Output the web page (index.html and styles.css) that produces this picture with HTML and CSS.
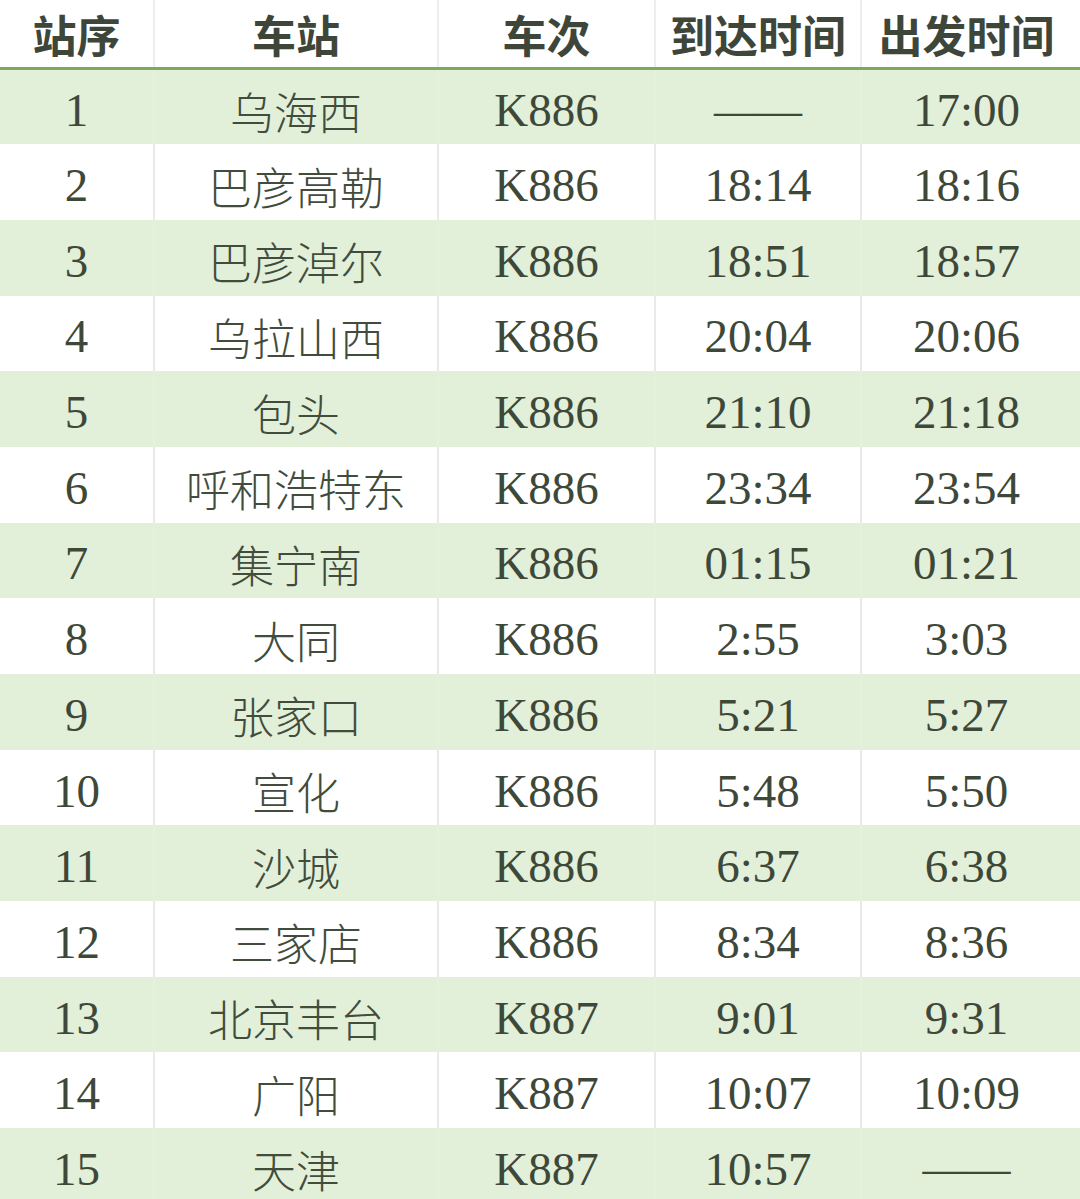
FILE: index.html
```html
<!DOCTYPE html>
<html lang="zh-CN">
<head>
<meta charset="utf-8">
<title>K886/K887 时刻表</title>
<link rel="stylesheet" href="styles.css">
</head>
<body>
<table class="timetable">
  <colgroup>
    <col class="c-no"><col class="c-station"><col class="c-train"><col class="c-arr"><col class="c-dep">
  </colgroup>
  <thead>
    <tr><th>站序</th><th>车站</th><th>车次</th><th>到达时间</th><th class="last">出发时间</th></tr>
  </thead>
  <tbody>
    <tr class="alt"><td>1</td><td class="cn">乌海西</td><td>K886</td><td class="dash">——</td><td class="last">17:00</td></tr>
    <tr><td>2</td><td class="cn">巴彦高勒</td><td>K886</td><td>18:14</td><td class="last">18:16</td></tr>
    <tr class="alt"><td>3</td><td class="cn">巴彦淖尔</td><td>K886</td><td>18:51</td><td class="last">18:57</td></tr>
    <tr><td>4</td><td class="cn">乌拉山西</td><td>K886</td><td>20:04</td><td class="last">20:06</td></tr>
    <tr class="alt"><td>5</td><td class="cn">包头</td><td>K886</td><td>21:10</td><td class="last">21:18</td></tr>
    <tr><td>6</td><td class="cn">呼和浩特东</td><td>K886</td><td>23:34</td><td class="last">23:54</td></tr>
    <tr class="alt"><td>7</td><td class="cn">集宁南</td><td>K886</td><td>01:15</td><td class="last">01:21</td></tr>
    <tr><td>8</td><td class="cn">大同</td><td>K886</td><td>2:55</td><td class="last">3:03</td></tr>
    <tr class="alt"><td>9</td><td class="cn">张家口</td><td>K886</td><td>5:21</td><td class="last">5:27</td></tr>
    <tr><td>10</td><td class="cn">宣化</td><td>K886</td><td>5:48</td><td class="last">5:50</td></tr>
    <tr class="alt"><td>11</td><td class="cn">沙城</td><td>K886</td><td>6:37</td><td class="last">6:38</td></tr>
    <tr><td>12</td><td class="cn">三家店</td><td>K886</td><td>8:34</td><td class="last">8:36</td></tr>
    <tr class="alt"><td>13</td><td class="cn">北京丰台</td><td>K887</td><td>9:01</td><td class="last">9:31</td></tr>
    <tr><td>14</td><td class="cn">广阳</td><td>K887</td><td>10:07</td><td class="last">10:09</td></tr>
    <tr class="alt"><td>15</td><td class="cn">天津</td><td>K887</td><td>10:57</td><td class="last dash">——</td></tr>
  </tbody>
</table>
</body>
</html>
```

FILE: styles.css
```css
html, body {
  margin: 0;
  padding: 0;
  background: #ffffff;
}

body {
  width: 1080px;
  height: 1199px;
  overflow: hidden;
}

.timetable {
  width: 1080px;
  table-layout: fixed;
  border-collapse: collapse;
  border-spacing: 0;
  font-family: "Liberation Serif", "Noto Sans CJK SC", serif;
  color: #3e4839;
}

.c-no { width: 154px; }
.c-station { width: 284px; }
.c-train { width: 217px; }
.c-arr { width: 206px; }
.c-dep { width: 219px; }

.timetable th {
  height: 67px;
  padding: 0;
  font-family: "Noto Sans CJK SC", sans-serif;
  font-size: 44px;
  font-weight: 600;
  line-height: 1;
  color: #3e463a;
  text-align: center;
  vertical-align: middle;
  border-left: 2px solid #ededed;
  border-bottom: 3px solid #7da95d;
}

.timetable th:first-child,
.timetable td:first-child {
  border-left: none;
}

.timetable td {
  height: 75.7px;
  box-sizing: border-box;
  padding: 7px 0 0 0;
  font-size: 47px;
  line-height: 1;
  text-align: center;
  vertical-align: middle;
  border-left: 2px solid #e9e9e9;
}

.timetable .last {
  padding-right: 9px;
}

.timetable td.num {
  letter-spacing: 0;
}

.timetable td.cn {
  font-family: "Noto Sans CJK SC", sans-serif;
  font-size: 44px;
  font-weight: 300;
  color: #414c3c;
}

.timetable td.dash {
  font-size: 44px;
  color: #3e4839;
}

.timetable tr.alt td {
  background: #e2efd9;
  border-left-color: #e5f1dd;
}
```
